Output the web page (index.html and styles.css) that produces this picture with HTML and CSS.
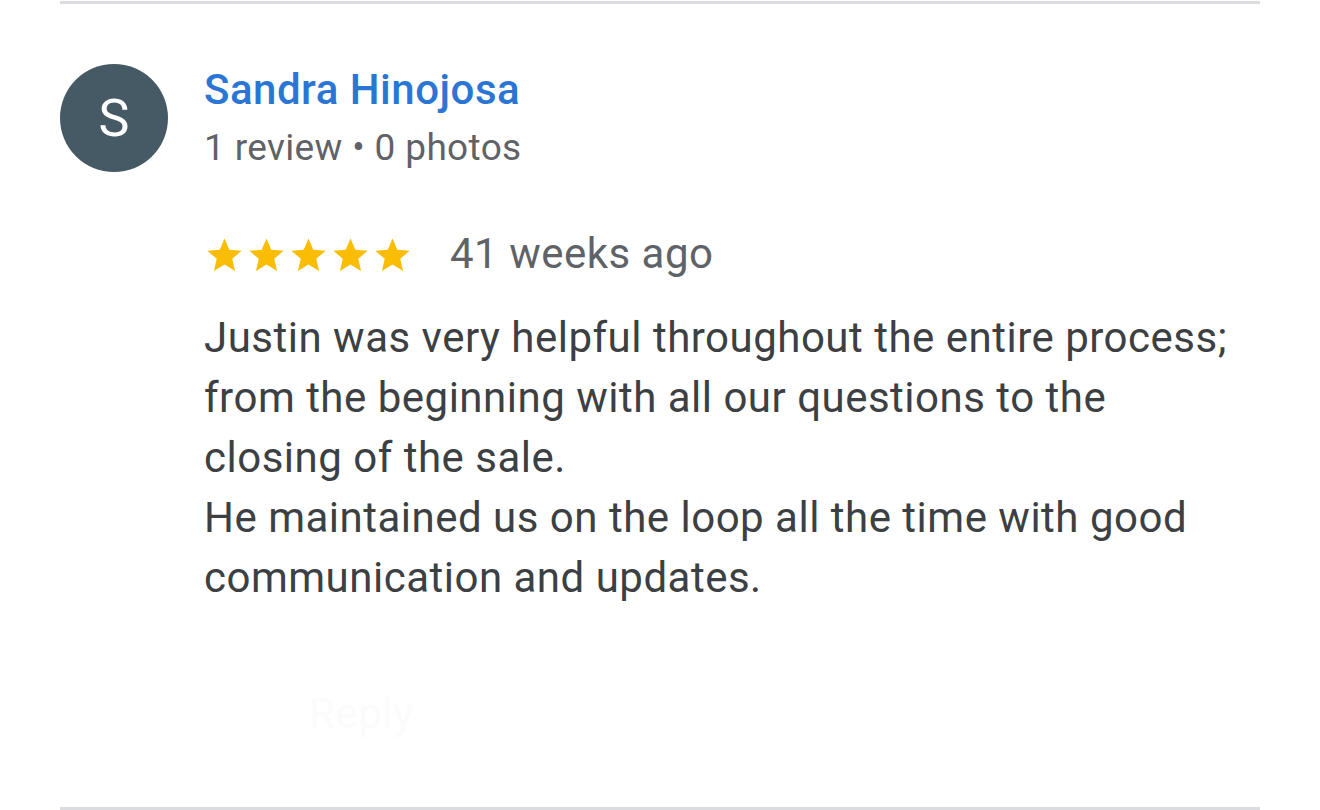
FILE: index.html
```html
<!DOCTYPE html>
<html>
<head>
<meta charset="utf-8">
<link rel="stylesheet" href="styles.css">
</head>
<body>
<div class="page">
  <div class="rule top"></div>
  <div class="review">
    <div class="header">
      <div class="avatar">S</div>
      <div class="who">
        <div class="name">Sandra Hinojosa</div>
        <div class="meta">1 review • 0 photos</div>
      </div>
    </div>
    <div class="body">
      <div class="rating">
        <div class="stars">
          <svg viewBox="0 0 24 24" class="star"><path d="M12 17.27L18.18 21l-1.64-7.03L22 9.24l-7.19-.61L12 2 9.19 8.63 2 9.24l5.46 4.73L5.82 21z"/></svg>
          <svg viewBox="0 0 24 24" class="star"><path d="M12 17.27L18.18 21l-1.64-7.03L22 9.24l-7.19-.61L12 2 9.19 8.63 2 9.24l5.46 4.73L5.82 21z"/></svg>
          <svg viewBox="0 0 24 24" class="star"><path d="M12 17.27L18.18 21l-1.64-7.03L22 9.24l-7.19-.61L12 2 9.19 8.63 2 9.24l5.46 4.73L5.82 21z"/></svg>
          <svg viewBox="0 0 24 24" class="star"><path d="M12 17.27L18.18 21l-1.64-7.03L22 9.24l-7.19-.61L12 2 9.19 8.63 2 9.24l5.46 4.73L5.82 21z"/></svg>
          <svg viewBox="0 0 24 24" class="star"><path d="M12 17.27L18.18 21l-1.64-7.03L22 9.24l-7.19-.61L12 2 9.19 8.63 2 9.24l5.46 4.73L5.82 21z"/></svg>
        </div>
        <span class="when">41 weeks ago</span>
      </div>
      <p class="text">Justin was very helpful throughout the entire process;<br>from the beginning with all our questions to the<br>closing of the sale.<br>He maintained us on the loop all the time with good<br>communication and updates.</p>
      <div class="reply">Reply</div>
    </div>
  </div>
  <div class="rule bottom"></div>
</div>
</body>
</html>
```
FILE: styles.css
```css
html, body {
  margin: 0;
  padding: 0;
  background: #ffffff;
}
.page {
  width: 1320px;
  height: 810px;
  font-family: Roboto, "Liberation Sans", sans-serif;
  letter-spacing: 0.5px;
  display: flex;
  flex-direction: column;
}
.rule {
  height: 3px;
  margin: 0 60px;
  background: #dadce0;
  flex-shrink: 0;
}
.rule.top {
  margin-top: 1px;
}
.review {
  flex: 1;
  padding: 60px 0 0 60px;
}
.header {
  display: flex;
  align-items: flex-start;
  gap: 36px;
}
.avatar {
  width: 108px;
  height: 108px;
  border-radius: 50%;
  background: #455a64;
  color: #fff;
  font-size: 52px;
  letter-spacing: 0;
  display: flex;
  align-items: center;
  justify-content: center;
  flex-shrink: 0;
}
.who {
  padding-top: 1px;
}
.name {
  color: #2b76d4;
  font-size: 42px;
  font-weight: 500;
  line-height: 50px;
}
.meta {
  color: #5f6368;
  font-size: 37px;
  letter-spacing: 0.35px;
  line-height: 50px;
  margin-top: 8px;
}
.body {
  padding-left: 144px;
}
.rating {
  display: flex;
  align-items: center;
  margin-top: 56px;
  height: 50px;
}
.stars {
  display: flex;
  gap: 1px;
  margin-right: 37px;
  margin-top: 2px;
}
.star {
  width: 41px;
  height: 41px;
  fill: #fbbc04;
}
.when {
  color: #5f6368;
  font-size: 42px;
  line-height: 50px;
}
.text {
  margin: 29px 0 0 0;
  color: #3c4043;
  font-size: 42px;
  line-height: 60px;
}
.reply {
  margin-top: 81px;
  margin-left: 105px;
  color: #fbfbfb;
  font-size: 42px;
  line-height: 50px;
}
```
